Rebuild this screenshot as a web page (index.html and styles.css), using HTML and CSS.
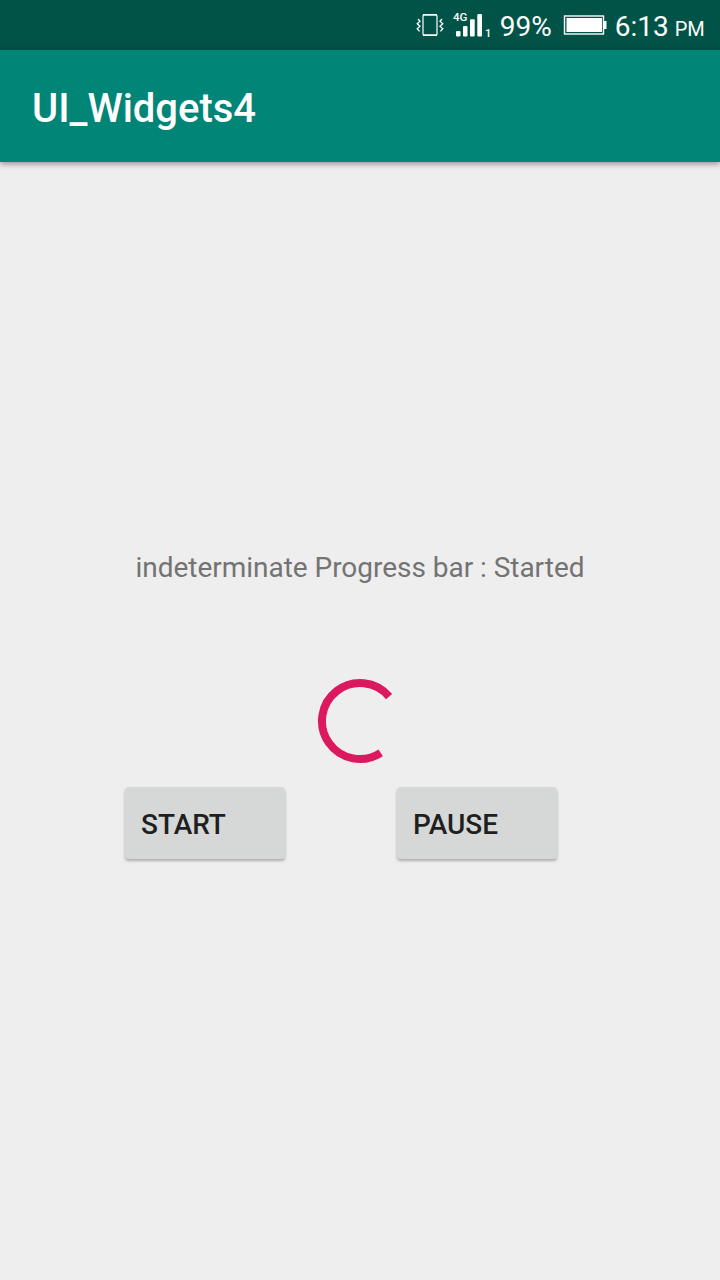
FILE: index.html
```html
<!DOCTYPE html>
<html lang="en">
<head>
<meta charset="utf-8">
<title>UI_Widgets4</title>
<link rel="stylesheet" href="styles.css">
</head>
<body>
<div class="screen">
  <div class="status-bar">
    <svg class="vibrate" width="28" height="24" viewBox="0 0 28 24" fill="none" stroke="#fff">
      <rect x="7" y="2" width="14" height="20" rx="1" stroke-width="1.2"/>
      <path d="M7 1.8h14M7 22.2h14" stroke-width="1.6"/>
      <path d="M2 6 4 8.2 1.2 10.8 4 13.2 1.2 15.8 3.6 18.4M26 6 24 8.2 26.8 10.8 24 13.2 26.8 15.8 24.4 18.4" stroke-width="1.3"/>
    </svg>
    <svg class="signal" width="41" height="34" viewBox="0 -4 41 34" fill="#fff">
      <rect x="3" y="19" width="4.5" height="5.5" rx="1"/>
      <rect x="10" y="14" width="4.5" height="10.5" rx="1"/>
      <rect x="17" y="7.3" width="4.7" height="17.2" rx="1"/>
      <rect x="24.3" y="2" width="4.7" height="22.5" rx="1"/>
      <text class="network" x="0" y="9">4G</text>
      <text class="sim" x="32" y="24.5">1</text>
    </svg>
    <span class="percent">99%</span>
    <svg class="battery" width="44" height="20" viewBox="0 0 44 20">
      <rect x="1.5" y="1" width="39" height="18" fill="none" stroke="#fff" stroke-width="1.4"/>
      <rect x="3.5" y="3" width="35.5" height="14" fill="#fff"/>
      <rect x="40.5" y="6" width="3" height="8" fill="#fff"/>
    </svg>
    <span class="clock">6:13</span>
    <span class="meridiem">PM</span>
  </div>
  <header class="app-bar"><h1 class="title">UI_Widgets4</h1></header>
  <main class="content">
    <p class="message">indeterminate Progress bar : Started</p>
    <svg class="spinner" width="96" height="96" viewBox="0 0 96 96">
      <path d="M77.1 23.6A38 38 0 1 0 68.7 79.9" fill="none" stroke="#dc195f" stroke-width="8"/>
    </svg>
    <div class="actions">
      <button class="button">START</button>
      <button class="button">PAUSE</button>
    </div>
  </main>
</div>
</body>
</html>
```

FILE: styles.css
```css
body {
  margin: 0;
  font-family: Roboto, sans-serif;
}

.screen {
  display: flex;
  flex-direction: column;
  height: 1280px;
  background: #eeeeee;
}

.status-bar {
  display: flex;
  justify-content: flex-end;
  box-sizing: border-box;
  height: 50px;
  padding-right: 15.5px;
  background: #005346;
  color: #fff;
  white-space: nowrap;
  line-height: 32px;
}

.vibrate {
  margin: 13px 9px 0 0;
}

.signal {
  margin: 8px 6px 0 0;
}

.network {
  font: 500 11.5px Roboto, sans-serif;
}

.sim {
  font: 500 11px Roboto, sans-serif;
}

.percent {
  width: 54px;
  margin: 11px 9px 0 0;
  font-size: 28px;
}

.battery {
  margin: 15px 8px 0 0;
}

.clock {
  width: 55px;
  margin-top: 11px;
  font-size: 28px;
}

.meridiem {
  margin: 13px 0 0 5px;
  font-size: 20px;
  letter-spacing: -0.2px;
}

.app-bar {
  display: flex;
  align-items: center;
  box-sizing: border-box;
  height: 112px;
  padding: 5px 32px 0;
  background: #008577;
  box-shadow: 0 2px 6px rgba(0, 0, 0, 0.4);
}

.title {
  margin: 0;
  color: #fff;
  font-size: 40px;
  font-weight: 500;
}

.content {
  display: flex;
  flex-direction: column;
  align-items: center;
  padding-top: 387px;
}

.message {
  margin: 0;
  color: #737373;
  font-size: 28px;
  letter-spacing: -0.03px;
  line-height: 38px;
}

.spinner {
  margin-top: 86px;
}

.actions {
  display: flex;
  gap: 112px;
  margin: 18px 38px 0 0;
}

.button {
  width: 160px;
  height: 72px;
  padding: 2px 16px 0;
  border: 0;
  border-radius: 4px;
  background: #d6d8d7;
  box-shadow: 0 2px 3px rgba(0, 0, 0, 0.28);
  color: #1f1f1f;
  font: 500 28px Roboto, sans-serif;
  letter-spacing: -0.05px;
  text-align: left;
}
```
